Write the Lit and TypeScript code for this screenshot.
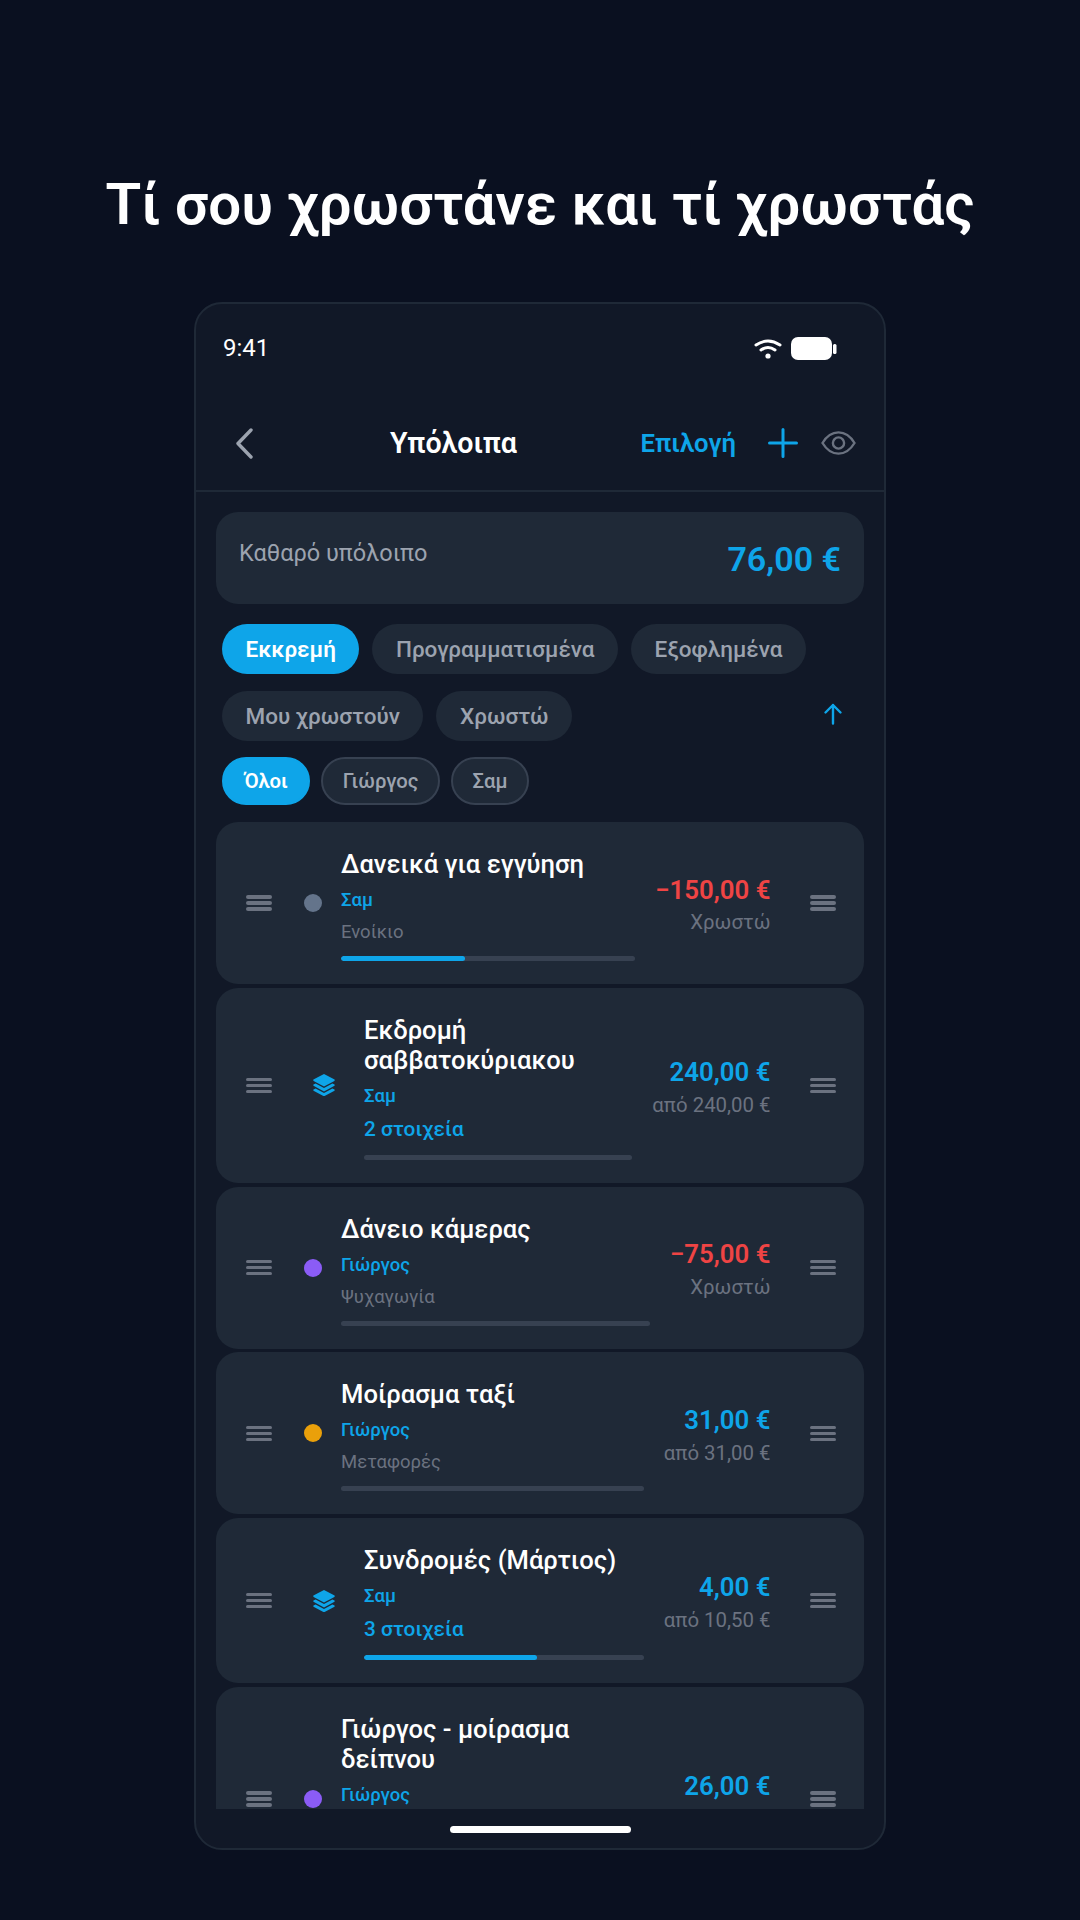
import { LitElement, html, css, nothing } from "lit";
import { customElement } from "lit/decorators.js";

interface Item {
  title: string[];
  user: string;
  cat?: string;
  items?: string;
  dot?: string;
  amount: string;
  neg?: boolean;
  sub: string;
  progress: number;
  tall?: boolean;
}

const ITEMS: Item[] = [
  { title: ["Δανεικά για εγγύηση"], user: "Σαμ", cat: "Ενοίκιο", dot: "#64748b", amount: "−150,00 €", neg: true, sub: "Χρωστώ", progress: 42 },
  { title: ["Εκδρομή", "σαββατοκύριακου"], user: "Σαμ", items: "2 στοιχεία", amount: "240,00 €", sub: "από 240,00 €", progress: 0 },
  { title: ["Δάνειο κάμερας"], user: "Γιώργος", cat: "Ψυχαγωγία", dot: "#8b5cf6", amount: "−75,00 €", neg: true, sub: "Χρωστώ", progress: 0 },
  { title: ["Μοίρασμα ταξί"], user: "Γιώργος", cat: "Μεταφορές", dot: "#eaa00a", amount: "31,00 €", sub: "από 31,00 €", progress: 0 },
  { title: ["Συνδρομές (Μάρτιος)"], user: "Σαμ", items: "3 στοιχεία", amount: "4,00 €", sub: "από 10,50 €", progress: 62 },
  { title: ["Γιώργος - μοίρασμα", "δείπνου"], user: "Γιώργος", cat: "Φαγητό", dot: "#8b5cf6", amount: "26,00 €", sub: "από 26,00 €", progress: 0, tall: true },
];

const handle = html`<div class="handle"><i></i><i></i><i></i></div>`;

const stack = html`<svg class="stack" viewBox="0 0 22 22" width="22" height="22" fill="#0ea5e9">
  <path d="M11 0 L21.6 5.6 Q22 6.4 21.4 6.9 L11 12.4 L0.6 6.9 Q0 6.4 0.4 5.6 Z" />
  <path d="M2.6 9.4 L11 13.9 L19.4 9.4 L21.5 10.6 Q22 11.2 21.5 11.8 L11 17.4 L0.5 11.8 Q0 11.2 0.5 10.6 Z" />
  <path d="M2.6 14.4 L11 18.9 L19.4 14.4 L21.5 15.6 Q22 16.2 21.5 16.8 L11.6 22 L10.4 22 L0.5 16.8 Q0 16.2 0.5 15.6 Z" />
</svg>`;

@customElement("app-root")
export class AppRoot extends LitElement {
  static styles = css`
    :host {
      display: block;
      width: 1080px;
      height: 1920px;
      overflow: hidden;
      background: #0a1020;
      font-family: Roboto, "Noto Sans", sans-serif;
      color: #fff;
    }
    .page {
      display: flex;
      flex-direction: column;
      align-items: center;
      height: 100%;
      box-sizing: border-box;
      padding-top: 168px;
    }
    h1 {
      margin: 0;
      font-size: 58.2px;
      line-height: 72px;
      font-weight: 600;
      text-align: center;
      white-space: nowrap;
    }
    .phone {
      margin-top: 62px;
      width: 692px;
      height: 1548px;
      box-sizing: border-box;
      background: #111827;
      border: 2px solid #1f2937;
      border-radius: 28px;
      overflow: hidden;
      display: flex;
      flex-direction: column;
    }
    .status {
      height: 70px;
      flex: none;
      box-sizing: border-box;
      padding: 18px 47px 0 27px;
      display: flex;
      align-items: center;
      justify-content: space-between;
      font-size: 24px;
    }
    .status .icons {
      display: flex;
      align-items: center;
      gap: 9px;
    }
    .nav {
      height: 118px;
      flex: none;
      box-sizing: border-box;
      border-bottom: 2px solid #1f2937;
      padding: 22px 28px 0 39px;
      display: flex;
      align-items: center;
    }
    .nav .ttl {
      margin-left: 136px;
      font-size: 28.6px;
      font-weight: 600;
    }
    .nav .sel {
      margin-left: auto;
      font-size: 25.7px;
      font-weight: 600;
      color: #0ea5e9;
    }
    .nav .plus {
      margin-left: 32px;
    }
    .nav .eye {
      margin-left: 23px;
    }
    .content {
      flex: 1;
      min-height: 0;
      box-sizing: border-box;
      padding: 20px 20px 0;
      display: flex;
      flex-direction: column;
      overflow: hidden;
    }
    .net {
      flex: none;
      box-sizing: border-box;
      height: 92px;
      border-radius: 22px;
      background: #1f2937;
      padding: 24px 23px 0 23px;
      display: flex;
      justify-content: space-between;
      align-items: flex-start;
    }
    .net .lbl {
      font-size: 23.5px;
      line-height: 34px;
      color: #9ca3af;
    }
    .net .val {
      font-size: 34px;
      line-height: 46px;
      font-weight: 600;
      color: #0ea5e9;
    }
    .chips {
      flex: none;
      margin-top: 20px;
      padding: 0 6px;
      display: flex;
      flex-direction: column;
      gap: 17px;
    }
    .row {
      display: flex;
      align-items: center;
      gap: 13px;
    }
    .chip {
      height: 50px;
      box-sizing: border-box;
      padding: 0 23.5px;
      border-radius: 25px;
      background: #1f2937;
      color: #9ca3af;
      font-size: 22.5px;
      font-weight: 500;
      display: flex;
      align-items: center;
    }
    .chip.on {
      background: #0ea5e9;
      color: #fff;
      font-weight: 600;
    }
    .arrow {
      margin-left: auto;
      margin-right: 15px;
      margin-bottom: 4px;
    }
    .filters {
      flex: none;
      margin-top: 16px;
      padding: 0 6px;
      display: flex;
      gap: 11px;
    }
    .fchip {
      height: 48px;
      box-sizing: border-box;
      padding: 0 19.5px;
      border-radius: 24px;
      background: #1f2937;
      border: 2px solid #374151;
      color: #9ca3af;
      font-size: 20.3px;
      font-weight: 500;
      display: flex;
      align-items: center;
    }
    .fchip.on {
      padding: 0 20.5px;
      background: #0ea5e9;
      border-color: #0ea5e9;
      color: #fff;
      font-weight: 600;
    }
    .list {
      flex: 1;
      min-height: 0;
      margin-top: 17px;
      overflow: hidden;
      display: flex;
      flex-direction: column;
      gap: 3.75px;
    }
    .card {
      flex: none;
      box-sizing: border-box;
      background: #1f2937;
      border-radius: 22px;
      padding: 23px 28.5px 23px 29.5px;
      display: flex;
      align-items: center;
    }
    .handle {
      flex: none;
      width: 26px;
      display: flex;
      flex-direction: column;
      gap: 2.5px;
    }
    .handle i {
      display: block;
      height: 3.5px;
      border-radius: 2px;
      background: #6b7280;
    }
    .dot {
      flex: none;
      width: 18px;
      height: 18px;
      border-radius: 50%;
      margin: 0 19.5px 0 32px;
    }
    .stack {
      flex: none;
      margin: 0 29px 0 41.5px;
    }
    .body {
      flex: 1;
      min-width: 0;
      padding-top: 4px;
      display: flex;
      flex-direction: column;
    }
    .body.tall {
      padding-bottom: 32px;
    }
    .t {
      font-size: 25.6px;
      line-height: 30px;
      font-weight: 500;
    }
    .u {
      margin-top: 10px;
      font-size: 18.5px;
      line-height: 22px;
      font-weight: 500;
      color: #0ea5e9;
    }
    .c {
      margin-top: 9px;
      font-size: 18.5px;
      line-height: 24px;
      color: #6b7280;
    }
    .n {
      margin-top: 9px;
      font-size: 20.8px;
      line-height: 27px;
      font-weight: 500;
      color: #0ea5e9;
    }
    .bar {
      margin-top: 12px;
      height: 5px;
      border-radius: 3px;
      background: #374151;
      overflow: hidden;
    }
    .bar b {
      display: block;
      height: 100%;
      background: #0ea5e9;
      border-radius: 3px;
    }
    .right {
      flex: none;
      margin: 4px 39px 0 20px;
      text-align: right;
      display: flex;
      flex-direction: column;
      gap: 4.5px;
    }
    .a {
      font-size: 25.8px;
      line-height: 30px;
      font-weight: 600;
      color: #0ea5e9;
    }
    .a.neg {
      color: #ef4444;
    }
    .s {
      font-size: 20.4px;
      line-height: 26px;
      color: #6b7280;
    }
    .foot {
      flex: none;
      height: 39px;
      display: flex;
      justify-content: center;
      padding-top: 17px;
      box-sizing: border-box;
    }
    .home {
      width: 181px;
      height: 7px;
      border-radius: 4px;
      background: #fff;
    }
  `;

  private card(it: Item) {
    return html`<div class="card">
      ${handle}
      ${it.dot ? html`<span class="dot" style="background:${it.dot}"></span>` : stack}
      <div class="body ${it.tall ? "tall" : ""}">
        <div class="t">${it.title.map((l, i) => html`${i ? html`<br />` : nothing}${l}`)}</div>
        <div class="u">${it.user}</div>
        ${it.cat ? html`<div class="c">${it.cat}</div>` : html`<div class="n">${it.items}</div>`}
        <div class="bar"><b style="width:${it.progress}%"></b></div>
      </div>
      <div class="right">
        <div class="a ${it.neg ? "neg" : ""}">${it.amount}</div>
        <div class="s">${it.sub}</div>
      </div>
      ${handle}
    </div>`;
  }

  render() {
    return html`<div class="page">
      <h1>Τί σου χρωστάνε και τί χρωστάς</h1>
      <div class="phone">
        <div class="status">
          <span>9:41</span>
          <div class="icons">
            <svg width="28" height="21" viewBox="0 0 28 21" fill="none" stroke="#fff" stroke-width="3" stroke-linecap="round">
              <path d="M2 7 Q14 -1 26 7" />
              <path d="M7 12 Q14 7 21 12" />
              <circle cx="14" cy="18" r="2.6" fill="#fff" stroke="none" />
            </svg>
            <svg width="46" height="23" viewBox="0 0 46 23">
              <rect x="0" y="0" width="41" height="23" rx="7" fill="#fff" />
              <rect x="42" y="7" width="3.5" height="10" rx="1.5" fill="#fff" />
            </svg>
          </div>
        </div>
        <div class="nav">
          <svg width="19" height="31" viewBox="0 0 19 31" fill="none" stroke="#9ca3af" stroke-width="3.4" stroke-linecap="round" stroke-linejoin="round">
            <path d="M16 2 L3 15.5 L16 29" />
          </svg>
          <span class="ttl">Υπόλοιπα</span>
          <span class="sel">Επιλογή</span>
          <svg class="plus" width="30" height="30" viewBox="0 0 30 30" stroke="#0ea5e9" stroke-width="3" stroke-linecap="round">
            <path d="M15 1.5 V28.5 M1.5 15 H28.5" />
          </svg>
          <svg class="eye" width="35" height="24" viewBox="0 0 35 24" fill="none" stroke="#6b7280" stroke-width="2.4">
            <path d="M1.5 12 C6 4.5 11.5 1.4 17.5 1.4 S29 4.5 33.5 12 C29 19.5 23.5 22.6 17.5 22.6 S6 19.5 1.5 12 Z" />
            <circle cx="17.5" cy="12" r="5.6" />
          </svg>
        </div>
        <div class="content">
          <div class="net">
            <span class="lbl">Καθαρό υπόλοιπο</span>
            <span class="val">76,00 €</span>
          </div>
          <div class="chips">
            <div class="row">
              <span class="chip on">Εκκρεμή</span>
              <span class="chip">Προγραμματισμένα</span>
              <span class="chip">Εξοφλημένα</span>
            </div>
            <div class="row">
              <span class="chip">Μου χρωστούν</span>
              <span class="chip">Χρωστώ</span>
              <svg class="arrow" width="20" height="22" viewBox="0 0 20 22" fill="none" stroke="#0ea5e9" stroke-width="2.4" stroke-linecap="round" stroke-linejoin="round">
                <path d="M10 20.5 V2 M2.5 9.5 L10 2 L17.5 9.5" />
              </svg>
            </div>
          </div>
          <div class="filters">
            <span class="fchip on">Όλοι</span>
            <span class="fchip">Γιώργος</span>
            <span class="fchip">Σαμ</span>
          </div>
          <div class="list">${ITEMS.map((it) => this.card(it))}</div>
        </div>
        <div class="foot"><div class="home"></div></div>
      </div>
    </div>`;
  }
}
